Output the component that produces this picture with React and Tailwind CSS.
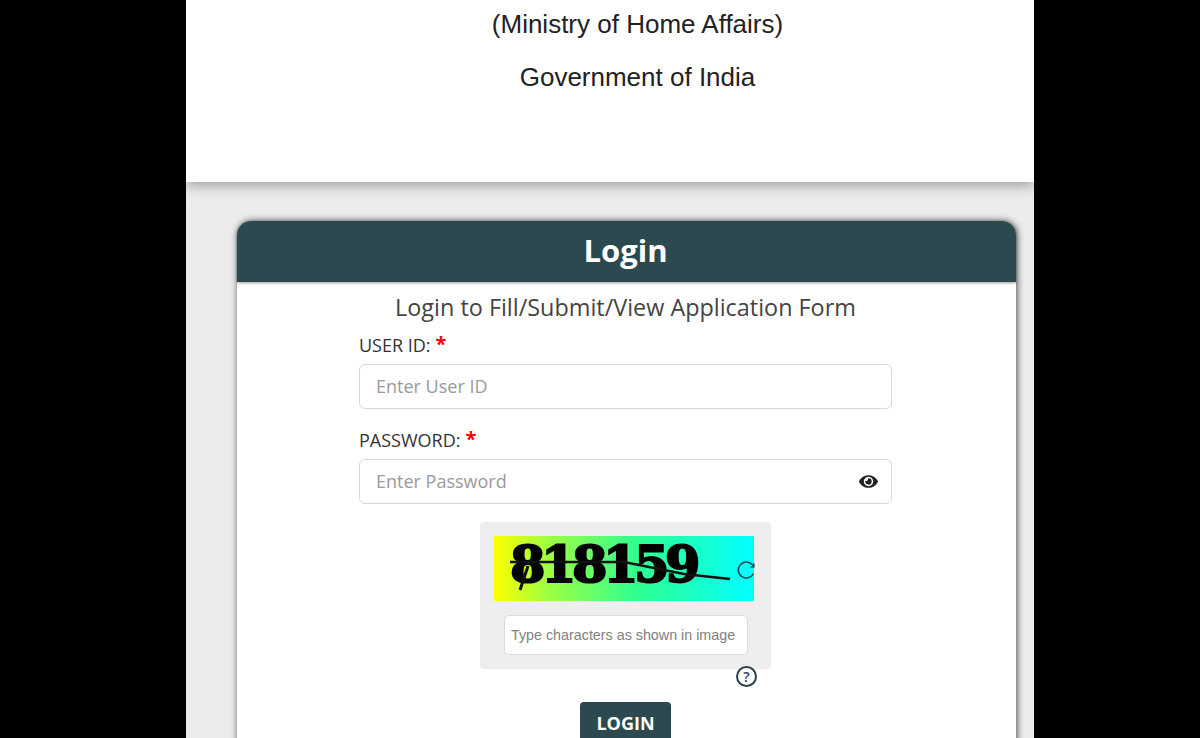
import React from "react";
import { FaEye } from "react-icons/fa";

const openSans = { fontFamily: '"Open Sans", sans-serif' };

const Label = ({ children }) => (
  <label className="flex items-start h-[27px] text-[18px] leading-[27px] font-medium text-[#333] tracking-[0px]">
    {children}
    <span className="ml-[5px] text-[20px] leading-[20px] mt-[2px] text-[#f00] font-bold">*</span>
  </label>
);

export default function App() {
  return (
    <div className="h-[738px] overflow-hidden bg-black flex justify-center" style={openSans}>
      <div className="w-[848px] ml-[20px] flex flex-col bg-[#ececec]">
        {/* header */}
        <div className="relative z-10 h-[182px] shrink-0 bg-white shadow-[0_2px_14px_rgba(0,0,0,0.4)] flex flex-col items-center pt-[8px] pl-[55px] text-[#222] text-[26px] [font-family:'Liberation_Sans',sans-serif]">
          <p className="leading-[32px]">(Ministry of Home Affairs)</p>
          <p className="leading-[32px] mt-[21px]">Government of India</p>
        </div>

        {/* card */}
        <div className="ml-[51px] mr-[18px] mt-[39px] flex-1 rounded-t-[14px] bg-white shadow-[1px_0_7px_rgba(0,0,0,0.7)]">
          <div className="h-[61px] pb-[2px] pr-[2px] rounded-t-[14px] bg-[#2b494f] flex items-center justify-center text-white text-[31px] font-bold shadow-[0_1px_3px_rgba(0,0,0,0.4)]">
            Login
          </div>
          <p className="mt-[9px] pr-[2px] text-center text-[23.4px] leading-[32px] text-[#444]">
            Login to Fill/Submit/View Application Form
          </p>

          <div className="w-[533px] ml-[122px] mt-[9px]">
            <Label>USER ID:</Label>
            <div className="mt-[5px] h-[45px] rounded-[6px] border border-[#d8d8d8] flex items-center px-4 text-[18px] text-[#9a9a9a]">
              Enter User ID
            </div>
            <div className="mt-[18px]">
              <Label>PASSWORD:</Label>
            </div>
            <div className="mt-[5px] h-[45px] rounded-[6px] border border-[#d8d8d8] flex items-center justify-between pl-4 pr-[13px] text-[18px] text-[#9a9a9a]">
              Enter Password
              <FaEye className="w-[19px] h-[19px] text-[#222]" />
            </div>
          </div>

          {/* captcha */}
          <div className="w-[291px] h-[147px] ml-[243px] mt-[18px] rounded-[4px] bg-[#eeeeee] flex flex-col pt-[14px]">
            <div className="relative w-[260px] h-[65px] ml-[14px] bg-[linear-gradient(90deg,#ffff00,#a0ff40_20%,#30ff90_55%,#00ffff)]">
              <span className="absolute left-[16px] top-[-8px] text-[51px] leading-[72px] font-bold text-black tracking-[-4.5px] [-webkit-text-stroke:2px_black] [font-family:'DejaVu_Serif',serif]">
                818159
              </span>
              <svg className="absolute inset-0 overflow-visible" width="260" height="65" viewBox="0 0 260 65">
                <path d="M16 26 L130 26 L190 38 L236 43" stroke="#111" strokeWidth="2.5" fill="none" />
                <path d="M34 30 L26 54" stroke="#111" strokeWidth="3" fill="none" />
              </svg>
              <svg className="absolute left-[242px] top-[24px] text-[#17505a]" width="20" height="20" viewBox="0 0 20 20" fill="none" stroke="currentColor" strokeWidth="1.6">
                <path d="M17.5 6.5 A8 8 0 1 0 17.5 13.5" />
                <path d="M17.8 3.5 V7 H14.5" />
              </svg>
            </div>
            <div className="mt-[14px] ml-[24px] w-[244px] h-[40px] pt-[2px] rounded-[5px] border border-[#dcdcdc] bg-white flex items-center pl-[6px] text-[14.3px] text-[#808080] [font-family:'Liberation_Sans',sans-serif]">
              Type characters as shown in image
            </div>
          </div>

          <div className="w-[291px] ml-[243px] flex justify-end pr-[14px] mt-[-3px]">
            <div className="w-[21px] h-[21px] rounded-full border-2 border-[#27404a] flex items-center justify-center text-[14px] font-semibold text-[#27404a] bg-white">
              ?
            </div>
          </div>

          <div className="flex justify-center pr-[2px] mt-[15px]">
            <div className="w-[91px] h-[45px] pb-[2px] rounded-[4px] bg-[#2b494f] text-white text-[18px] font-bold flex items-center justify-center">
              LOGIN
            </div>
          </div>
        </div>
      </div>
    </div>
  );
}
